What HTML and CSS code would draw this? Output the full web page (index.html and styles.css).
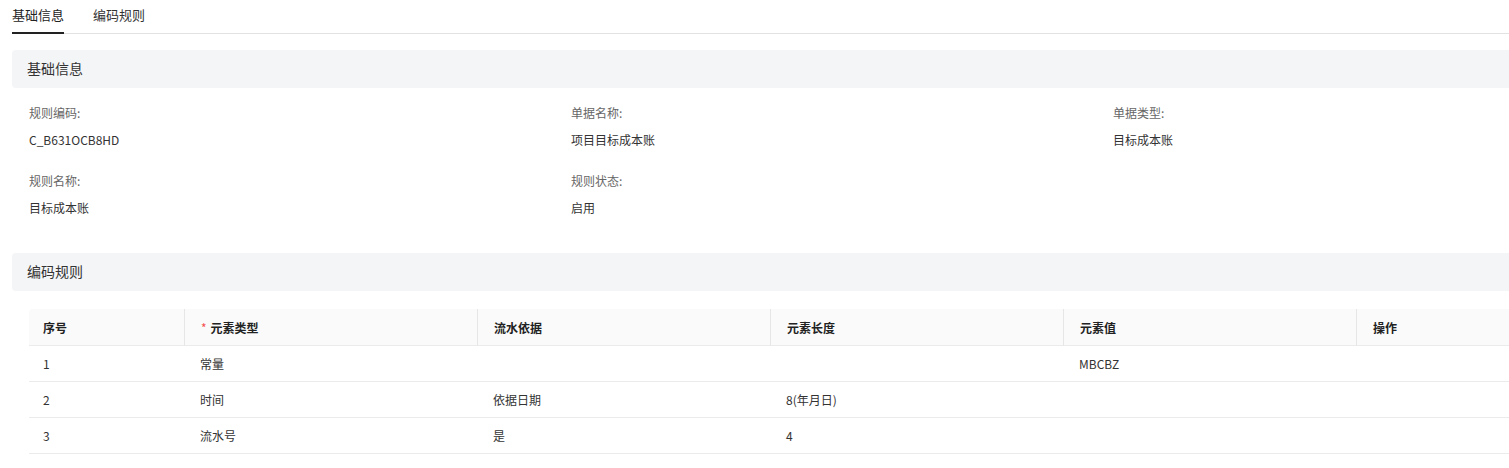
FILE: index.html
```html
<!DOCTYPE html>
<html lang="zh-CN">
<head>
    <meta charset="UTF-8">
    <meta name="viewport" content="width=device-width, initial-scale=1.0">
    <title>编码规则详情</title>
    <link rel="stylesheet" href="styles.css">
</head>
<body>
    <div class="page">
        <div class="tabs">
            <div class="tab active">基础信息</div>
            <div class="tab">编码规则</div>
        </div>

        <div class="section-title">基础信息</div>
        <div class="info-grid">
            <div class="field">
                <div class="label">规则编码:</div>
                <div class="value">C_B631OCB8HD</div>
            </div>
            <div class="field">
                <div class="label">单据名称:</div>
                <div class="value">项目目标成本账</div>
            </div>
            <div class="field">
                <div class="label">单据类型:</div>
                <div class="value">目标成本账</div>
            </div>
            <div class="field">
                <div class="label">规则名称:</div>
                <div class="value">目标成本账</div>
            </div>
            <div class="field">
                <div class="label">规则状态:</div>
                <div class="value">启用</div>
            </div>
        </div>

        <div class="section-title second">编码规则</div>
        <table class="rule-table">
            <thead>
                <tr>
                    <th class="col-index">序号</th>
                    <th><span class="required">*</span>元素类型</th>
                    <th>流水依据</th>
                    <th>元素长度</th>
                    <th>元素值</th>
                    <th>操作</th>
                </tr>
            </thead>
            <tbody>
                <tr>
                    <td class="col-index">1</td>
                    <td>常量</td>
                    <td></td>
                    <td></td>
                    <td>MBCBZ</td>
                    <td></td>
                </tr>
                <tr>
                    <td class="col-index">2</td>
                    <td>时间</td>
                    <td>依据日期</td>
                    <td>8(年月日)</td>
                    <td></td>
                    <td></td>
                </tr>
                <tr>
                    <td class="col-index">3</td>
                    <td>流水号</td>
                    <td>是</td>
                    <td>4</td>
                    <td></td>
                    <td></td>
                </tr>
            </tbody>
        </table>
    </div>
</body>
</html>
```

FILE: styles.css
```css
html, body {
    margin: 0;
    padding: 0;
    background: #fff;
    overflow: hidden;
}
body {
    font-family: "Noto Sans CJK SC", "Noto Sans", sans-serif;
    color: #333;
}
.page {
    width: 1654px;
    padding-left: 12px;
}
.tabs {
    display: flex;
    gap: 29px;
    border-bottom: 1px solid #e2e2e2;
}
.tab {
    font-size: 13px;
    line-height: 30px;
    padding-bottom: 2px;
    border-bottom: 2px solid transparent;
    margin-bottom: -1px;
    color: #333;
}
.tab.active {
    border-bottom-color: #222;
    color: #222;
}
.section-title {
    margin-top: 16px;
    height: 38px;
    line-height: 37px;
    padding-left: 15px;
    font-size: 14px;
    color: #333;
    background: #f4f5f7;
    border-radius: 4px;
}
.section-title.second {
    margin-top: 35px;
}
.info-grid {
    display: grid;
    grid-template-columns: repeat(3, 542px);
    row-gap: 21px;
    padding: 15px 0 0 17px;
}
.label {
    font-size: 12px;
    line-height: 20px;
    color: #666;
}
.value {
    font-size: 12px;
    line-height: 20px;
    margin-top: 7px;
    color: #333;
}
.rule-table {
    margin: 18px 0 0 17px;
    border-collapse: separate;
    border-spacing: 0;
    width: 1620px;
    table-layout: fixed;
    font-size: 12px;
}
.rule-table th, .rule-table td {
    height: 35px;
    padding: 0 16px;
    text-align: left;
    border-bottom: 1px solid #ebebeb;
    white-space: nowrap;
}
.rule-table th {
    height: 36px;
    background: #fafafa;
    font-weight: bold;
    color: #222;
    border-left: 1px solid #e6e6e6;
}
.rule-table th:first-child {
    border-left: none;
    border-top-left-radius: 4px;
}
.rule-table td {
    color: #333;
}
.rule-table .col-index {
    width: 155px;
    box-sizing: border-box;
    padding-left: 14px;
}
.required {
    color: #f5504f;
    margin-right: 4px;
    font-weight: normal;
}
```
